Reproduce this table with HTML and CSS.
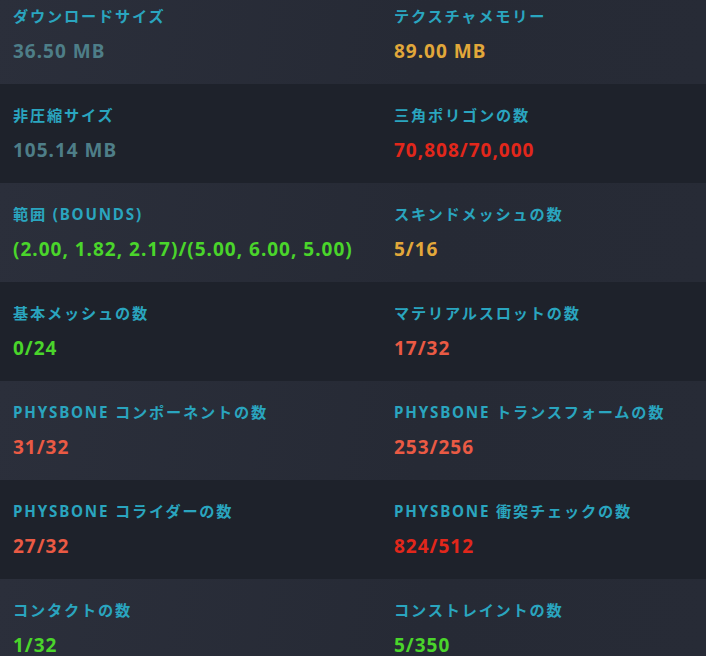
FILE: index.html
```html
<!DOCTYPE html>
<html lang="ja">
<head>
<meta charset="utf-8">
<link rel="stylesheet" href="styles.css">
</head>
<body>
<div class="stats">
  <div class="row light">
    <div class="cell"><div class="label">ダウンロードサイズ</div><div class="value gray">36.50 MB</div></div>
    <div class="cell"><div class="label">テクスチャメモリー</div><div class="value yellow">89.00 MB</div></div>
  </div>
  <div class="row dark">
    <div class="cell"><div class="label">非圧縮サイズ</div><div class="value gray">105.14 MB</div></div>
    <div class="cell"><div class="label">三角ポリゴンの数</div><div class="value red">70,808/70,000</div></div>
  </div>
  <div class="row light">
    <div class="cell"><div class="label">範囲 (BOUNDS)</div><div class="value green">(2.00, 1.82, 2.17)/(5.00, 6.00, 5.00)</div></div>
    <div class="cell"><div class="label">スキンドメッシュの数</div><div class="value yellow">5/16</div></div>
  </div>
  <div class="row dark">
    <div class="cell"><div class="label">基本メッシュの数</div><div class="value green">0/24</div></div>
    <div class="cell"><div class="label">マテリアルスロットの数</div><div class="value orange">17/32</div></div>
  </div>
  <div class="row light">
    <div class="cell"><div class="label">PHYSBONE コンポーネントの数</div><div class="value orange">31/32</div></div>
    <div class="cell"><div class="label">PHYSBONE トランスフォームの数</div><div class="value orange">253/256</div></div>
  </div>
  <div class="row dark">
    <div class="cell"><div class="label">PHYSBONE コライダーの数</div><div class="value orange">27/32</div></div>
    <div class="cell"><div class="label">PHYSBONE 衝突チェックの数</div><div class="value red">824/512</div></div>
  </div>
  <div class="row light">
    <div class="cell"><div class="label">コンタクトの数</div><div class="value green">1/32</div></div>
    <div class="cell"><div class="label">コンストレイントの数</div><div class="value green">5/350</div></div>
  </div>
</div>
</body>
</html>
```
FILE: styles.css
```css
html, body {
  margin: 0;
  padding: 0;
  background: #272b36;
  overflow: hidden;
}
body {
  font-family: "Noto Sans", "Noto Sans CJK JP", sans-serif;
  font-weight: 700;
}
.stats {
  margin-top: -15px;
}
.row {
  display: grid;
  grid-template-columns: 381px 1fr;
  height: 99px;
  box-sizing: border-box;
  padding-top: 20px;
}
.light {
  background: linear-gradient(100deg, #2b2f3b 0%, #262a35 60%, #272b36 100%);
}
.dark {
  background: #1e222b;
}
.cell {
  padding-left: 13px;
}
.label {
  color: #2aa5bf;
  font-size: 15.2px;
  line-height: 22px;
  letter-spacing: 1.8px;
}
.value {
  margin-top: 11px;
  font-size: 19px;
  line-height: 26px;
  letter-spacing: 1px;
}
.gray { color: #4e7e88; }
.yellow { color: #e2a83a; }
.red { color: #e2271b; }
.orange { color: #ea5a44; }
.green { color: #4ad52b; }
```
